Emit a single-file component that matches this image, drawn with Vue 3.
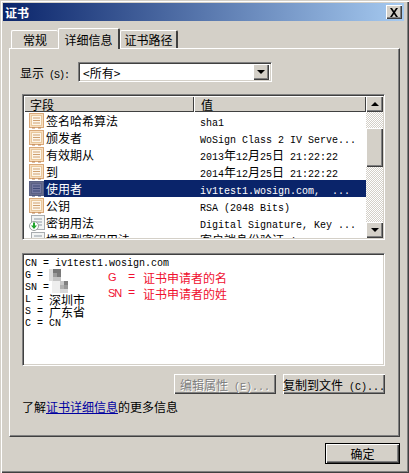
<script setup>
const fields = [
  { name: '签名哈希算法', value: ['sha1'] },
  { name: '颁发者', value: ['WoSign Class 2 IV Serve...'] },
  { name: '有效期从', value: ['2013', '年', '12', '月', '25', '日', ' 21:22:22'] },
  { name: '到', value: ['2014', '年', '12', '月', '25', '日', ' 21:22:22'] },
  { name: '使用者', value: ['iv1test1.wosign.com,  ...'], selected: true },
  { name: '公钥', value: ['RSA (2048 Bits)'] },
  { name: '密钥用法', value: ['Digital Signature, Key ...'], ext: true },
  { name: '增强型密钥用法', value: ['客户端身份验证', ' (1.3.6.1'], ext: true },
]

const isWide = (part) => /[^\x00-\x7f]/.test(part)
</script>

<template>
  <div class="dialog">
    <div class="titlebar">
      <span class="title">证书</span>
      <button class="close" type="button">
        <svg width="10" height="9" viewBox="0 0 10 9"><path d="M1 0h2l2 3 2-3h2L6 4.500 9 9H7L5 6 3 9H1l3-4.500z" fill="#000" /></svg>
      </button>
    </div>

    <div class="tabs">
      <div class="tab first">常规</div>
      <div class="tab active">详细信息</div>
      <div class="tab last">证书路径</div>
    </div>

    <div class="panel">
      <div class="show-row">
        <span class="show-label">显示<span class="latin label-key"> (S):</span></span>
        <div class="combo sunken">
          <span class="combo-text">&lt;所有&gt;</span>
          <span class="combo-btn raised"><i class="arrow down"></i></span>
        </div>
      </div>

      <div class="list sunken">
        <div class="list-main">
          <div class="list-head">
            <div class="head-cell first-col">字段</div>
            <div class="head-cell second-col">值</div>
          </div>
          <div class="rows">
            <div v-for="f in fields" :key="f.name" class="row" :class="{ selected: f.selected }">
              <div class="cell-name">
                <svg class="row-icon" width="16" height="16" viewBox="0 0 16 16">
                  <template v-if="f.ext">
                    <rect x="2.500" y="0.500" width="13" height="14" fill="#f2f4f4" stroke="#a8acb0" />
                    <path d="M5 4h8M5 7h8M8 10h5" stroke="#8f9aa4" />
                    <circle cx="5" cy="11" r="4.500" fill="#fff" stroke="#9aa0a0" />
                    <path d="M4 7.500h2v3h2L5 14 2 10.500h2z" fill="#1fa32c" />
                  </template>
                  <template v-else>
                    <rect x="0.500" y="0.500" width="14" height="14" :fill="f.selected ? '#6a6f8e' : '#f8dfc0'" :stroke="f.selected ? '#5b6185' : '#d9a878'" />
                    <rect x="2.500" y="2.500" width="10" height="10" :fill="f.selected ? '#7478a0' : '#fdf6ea'" :stroke="f.selected ? '#5b6185' : '#e9c89c'" />
                    <path d="M4 5h7M4 7.500h7M4 10h7" :stroke="f.selected ? '#3f4a78' : '#cfa070'" />
                    <path d="M3 15h3M9 15h3" :stroke="f.selected ? '#3f4a78' : '#b98050'" />
                  </template>
                </svg>
                <span class="name-text">{{ f.name }}</span>
              </div>
              <div class="cell-value">
                <span v-for="(part, i) in f.value" :key="i" :class="isWide(part) ? 'wide' : 'mono'">{{ part }}</span>
              </div>
            </div>
          </div>
        </div>
        <div class="scrollbar">
          <span class="sb-btn raised"><i class="arrow up"></i></span>
          <div class="sb-track">
            <span class="sb-thumb raised"></span>
          </div>
          <span class="sb-btn raised"><i class="arrow down"></i></span>
        </div>
      </div>

      <div class="detail sunken">
        <div class="detail-line"><span class="mono">CN = iv1test1.wosign.com</span></div>
        <div class="detail-line">
          <span class="mono">G = </span>
          <svg class="blur" width="12" height="12" viewBox="0 0 3 3">
            <path d="M0 0h1v3H0z" fill="#dcdcdc" />
            <path d="M1 0h2v1H1z" fill="#777" />
            <path d="M1 1h1v1H1z" fill="#9c9c9c" />
            <path d="M2 1h1v1H2z" fill="#7a7a7a" />
            <path d="M1 2h2v1H1z" fill="#c4c4c4" />
          </svg>
        </div>
        <div class="detail-line">
          <span class="mono">SN = </span>
          <svg class="blur blur-sn" width="16" height="12" viewBox="0 0 4 3">
            <path d="M0 0h2v3H0z" fill="#eee" />
            <path d="M2 0h1v1H2z" fill="#c8c8c8" />
            <path d="M3 0h1v1H3z" fill="#808080" />
            <path d="M2 1h1v1H2z" fill="#b0b0b0" />
            <path d="M3 1h1v1H3z" fill="#989898" />
            <path d="M2 2h2v1H2z" fill="#d8d8d8" />
          </svg>
        </div>
        <div class="detail-line"><span class="mono">L = </span><span class="wide">深圳市</span></div>
        <div class="detail-line"><span class="mono">S = </span><span class="wide">广东省</span></div>
        <div class="detail-line"><span class="mono">C = CN</span></div>
        <div class="note">
          <div class="note-line"><span class="note-key">G</span><span class="note-eq">=</span><span>证书申请者的名</span></div>
          <div class="note-line"><span class="note-key">SN</span><span class="note-eq">=</span><span>证书申请者的姓</span></div>
        </div>
      </div>

      <div class="actions">
        <button class="btn raised disabled" type="button">编辑属性<span class="latin"> (E)...</span></button>
        <button class="btn raised" type="button">复制到文件<span class="latin"> (C)...</span></button>
      </div>

      <div class="more">了解<a class="more-link">证书详细信息</a>的更多信息</div>
    </div>

    <div class="footer">
      <button class="ok" type="button">确定</button>
    </div>
  </div>
</template>

<style>
html,
body {
  margin: 0;
  background: #d4d0c8;
}
</style>

<style scoped>
.dialog {
  box-sizing: border-box;
  width: 409px;
  height: 473px;
  padding: 3px 5px 0 3px;
  overflow: hidden;
  color: #000;
  background: #d4d0c8;
  font-family: "Noto Sans CJK SC", "Liberation Sans", sans-serif;
  font-size: 12px;
  box-shadow:
    inset 1px 1px 0 #d4d0c8,
    inset 2px 2px 0 #fff,
    inset -1px -1px 0 #404040,
    inset -2px -2px 0 #808080;
}

.titlebar {
  display: flex;
  align-items: center;
  justify-content: space-between;
  height: 18px;
  padding: 0 2px;
  background: linear-gradient(90deg, #0a246a, #a6caf0);
}

.title {
  color: #fff;
  font-size: 12px;
  font-weight: 700;
}

.close {
  display: flex;
  align-items: center;
  justify-content: center;
  width: 16px;
  height: 14px;
  padding: 0;
  background: #d4d0c8;
  border: 0;
  box-shadow:
    inset 1px 1px 0 #fff,
    inset -1px -1px 0 #404040,
    inset -2px -2px 0 #808080;
}

.tabs {
  display: flex;
  align-items: flex-end;
  height: 27px;
  margin-left: 8px;
}

.tab {
  box-sizing: border-box;
  display: flex;
  align-items: center;
  justify-content: center;
  height: 18px;
  border-top: 1px solid #fff;
  border-left: 1px solid #fff;
  border-right: 2px solid #404040;
  border-radius: 2px 2px 0 0;
}

.tab.first {
  width: 47px;
  border-right: 0;
}

.tab.active {
  position: relative;
  z-index: 1;
  width: 62px;
  height: 21px;
  margin-bottom: -1px;
  background: #d4d0c8;
}

.tab.last {
  width: 58px;
}

.panel {
  box-sizing: border-box;
  width: 391px;
  height: 389px;
  margin-left: 6px;
  padding: 13px 14px 0 12px;
  border: 1px solid;
  border-color: #fff #404040 #404040 #fff;
  box-shadow: inset -1px -1px 0 #808080;
}

.latin,
.mono {
  font-family: "Liberation Mono", monospace;
  font-size: 10px;
  white-space: pre;
}

.wide {
  font-size: 12px;
  white-space: pre;
}

.sunken {
  box-sizing: border-box;
  border: 1px solid;
  border-color: #808080 #fff #fff #808080;
  box-shadow:
    inset 1px 1px 0 #404040,
    inset -1px -1px 0 #d4d0c8;
}

.raised {
  box-sizing: border-box;
  background: #d4d0c8;
  box-shadow:
    inset 1px 1px 0 #fff,
    inset -1px -1px 0 #404040,
    inset -2px -2px 0 #808080;
}

.show-row {
  display: flex;
  align-items: center;
  height: 20px;
}

.show-label {
  width: 58px;
  margin-left: -2px;
  white-space: pre;
}

.label-key {
  letter-spacing: -1px;
}

.combo {
  display: flex;
  align-items: center;
  justify-content: space-between;
  width: 194px;
  height: 20px;
  padding: 2px;
  background: #fff;
}

.combo-text {
  padding-left: 2px;
}

.combo-btn {
  display: flex;
  align-items: center;
  justify-content: center;
  width: 16px;
  height: 16px;
}

.arrow {
  display: block;
  width: 0;
  height: 0;
  border-left: 4px solid transparent;
  border-right: 4px solid transparent;
}

.arrow.down {
  border-top: 4px solid #000;
}

.arrow.up {
  border-bottom: 4px solid #000;
}

.list {
  display: flex;
  height: 146px;
  margin-top: 12px;
  padding: 1px;
  background: #fff;
}

.list-main {
  flex: 1;
  min-width: 0;
  overflow: hidden;
}

.list-head {
  display: flex;
  height: 16px;
}

.head-cell {
  box-sizing: border-box;
  display: flex;
  align-items: center;
  height: 16px;
  background: #d4d0c8;
  box-shadow:
    inset 1px 1px 0 #fff,
    inset -1px -1px 0 #404040;
}

.first-col {
  width: 170px;
  padding-left: 6px;
}

.second-col {
  flex: 1;
  padding-left: 7px;
}

.rows {
  height: 126px;
  overflow: hidden;
}

.row {
  display: flex;
  height: 17px;
  line-height: 17px;
  white-space: nowrap;
}

.cell-name {
  display: flex;
  align-items: center;
  width: 170px;
  padding-left: 5px;
  box-sizing: border-box;
}

.row-icon {
  flex: none;
}

.name-text {
  display: block;
  flex: 1;
  padding-left: 2px;
  margin-left: -1px;
}

.cell-value {
  flex: 1;
  padding-left: 6px;
}

.row.selected .name-text,
.row.selected .cell-value {
  color: #fff;
  background: #0a246a;
}

.scrollbar {
  display: flex;
  flex-direction: column;
  flex: none;
  width: 17px;
}

.sb-btn {
  display: flex;
  flex: none;
  align-items: center;
  justify-content: center;
  height: 16px;
}

.sb-track {
  flex: 1;
  padding-top: 16px;
  background: repeating-conic-gradient(#d4d0c8 0 25%, #fff 0 50%) 0 0 / 2px 2px;
}

.sb-thumb {
  display: block;
  height: 39px;
}

.detail {
  position: relative;
  height: 113px;
  margin-top: 13px;
  padding: 3px 2px;
  background: #fff;
}

.detail-line {
  display: flex;
  align-items: center;
  height: 12px;
}

.blur {
  display: block;
}

.blur-sn {
  margin-left: -3px;
}

.note {
  position: absolute;
  top: 15px;
  left: 84px;
  color: #f01030;
  font-size: 12px;
}

.note-line {
  display: flex;
  align-items: center;
  height: 16px;
}

.note-key {
  flex: none;
  box-sizing: border-box;
  width: 21px;
  padding-left: 1px;
  font-family: "Liberation Sans", sans-serif;
  font-size: 11px;
  letter-spacing: -1px;
}

.note-eq {
  flex: none;
  width: 15px;
  font-family: "Liberation Mono", monospace;
}

.actions {
  display: flex;
  justify-content: flex-end;
  gap: 7px;
  margin-top: 8px;
}

.btn {
  width: 102px;
  height: 20px;
  padding: 0;
  color: #000;
  font-family: inherit;
  font-size: 12px;
  white-space: nowrap;
  border: 0;
}

.btn.disabled {
  color: #808080;
  text-shadow: 1px 1px 0 #fff;
}

.more {
  margin-top: 5px;
  line-height: 16px;
}

.more-link {
  color: #0000a0;
  text-decoration: underline;
}

.footer {
  display: flex;
  justify-content: flex-end;
  margin-top: 6px;
  padding-right: 4px;
}

.ok {
  box-sizing: border-box;
  width: 75px;
  height: 21px;
  padding: 0;
  color: #000;
  font-family: inherit;
  font-size: 12px;
  background: #d4d0c8;
  border: 1px solid #000;
  box-shadow:
    inset 1px 1px 0 #fff,
    inset -1px -1px 0 #404040,
    inset -2px -2px 0 #808080;
}
</style>
